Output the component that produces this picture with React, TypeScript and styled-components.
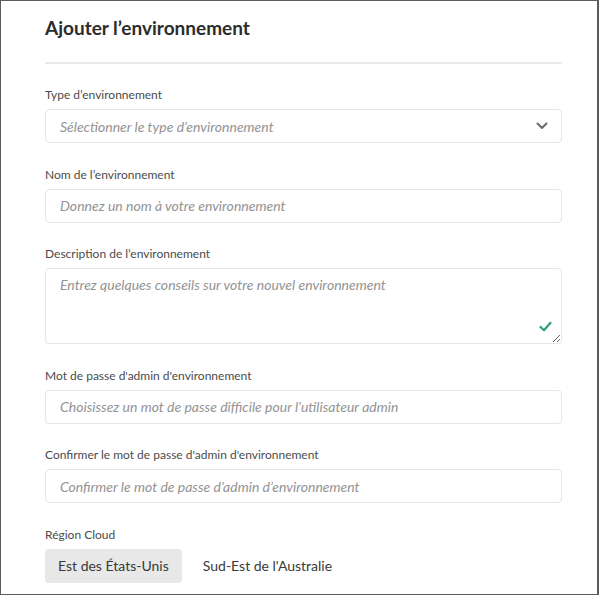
import React from "react";
import styled, { createGlobalStyle } from "styled-components";

const Global = createGlobalStyle`
  html, body { margin: 0; padding: 0; background: #fff; }
  body { font-family: Lato, "Open Sans", sans-serif; }
  * { box-sizing: border-box; }
`;

const Frame = styled.div`
  width: 599px;
  height: 595px;
  border: 1px solid #5c5c5c;
  border-right-width: 2px;
  background: #fff;
  padding: 15px 35px 0 44px;
  overflow: hidden;
`;

const Title = styled.h1`
  margin: 0;
  font-size: 19px;
  line-height: 24px;
  font-weight: 700;
  color: #2c2c2c;
`;

const Divider = styled.hr`
  margin: 22px 0 23px;
  border: none;
  height: 2px;
  background: #eaeaea;
`;

const Form = styled.div`
  display: flex;
  flex-direction: column;
  gap: 23.5px;
`;

const Field = styled.div`
  display: flex;
  flex-direction: column;
`;

const Label = styled.label`
  font-size: 12px;
  line-height: 16px;
  color: #4b4b4b;
  margin-bottom: 6px;
`;

const fieldBase = `
  width: 100%;
  border: 1px solid #e6e6e6;
  border-radius: 4px;
  background: #fff;
  font-family: Lato, "Open Sans", sans-serif;
  font-size: 14px;
  color: #2c2c2c;
  outline: none;
`;

const TextInput = styled.input`
  ${fieldBase}
  height: 34px;
  padding: 0 14px;
  &::placeholder { color: #939393; font-style: italic; }
`;

const SelectBox = styled.div`
  ${fieldBase}
  height: 34px;
  padding: 0 13px 0 14px;
  display: flex;
  align-items: center;
  justify-content: space-between;
  cursor: pointer;
`;

const Placeholder = styled.span`
  color: #939393;
  font-style: italic;
`;

const AreaWrap = styled.div`
  position: relative;
`;

const TextArea = styled.textarea`
  ${fieldBase}
  display: block;
  height: 76px;
  padding: 6px 14px;
  line-height: 20px;
  resize: both;
  &::placeholder { color: #939393; font-style: italic; }
`;

const Check = styled.svg`
  position: absolute;
  right: 10px;
  bottom: 12px;
`;

const Segments = styled.div`
  display: flex;
  gap: 8px;
`;

const Segment = styled.button<{ $selected?: boolean }>`
  height: 34px;
  padding: 0 13px;
  border: none;
  border-radius: 4px;
  background: ${(p) => (p.$selected ? "#e8e8e8" : "transparent")};
  color: #3a3a3a;
  font-family: Lato, "Open Sans", sans-serif;
  font-size: 14px;
  cursor: pointer;
`;

export default function App() {
  return (
    <>
      <Global />
      <Frame>
        <Title>Ajouter l’environnement</Title>
        <Divider />
        <Form>
          <Field>
            <Label>Type d’environnement</Label>
            <SelectBox>
              <Placeholder>Sélectionner le type d’environnement</Placeholder>
              <svg width="12" height="8" viewBox="0 0 12 8">
                <path d="M1.5 1.5 L6 6 L10.5 1.5" fill="none" stroke="#6b6b6b" strokeWidth="2" strokeLinecap="round" strokeLinejoin="round" />
              </svg>
            </SelectBox>
          </Field>
          <Field>
            <Label>Nom de l’environnement</Label>
            <TextInput placeholder="Donnez un nom à votre environnement" />
          </Field>
          <Field>
            <Label>Description de l’environnement</Label>
            <AreaWrap>
              <TextArea placeholder="Entrez quelques conseils sur votre nouvel environnement" />
              <Check width="13" height="11" viewBox="0 0 13 11">
                <path d="M1.5 6 L5 9.2 L11.5 1.8" fill="none" stroke="#2d9d78" strokeWidth="2.2" strokeLinecap="round" strokeLinejoin="round" />
              </Check>
            </AreaWrap>
          </Field>
          <Field>
            <Label>Mot de passe d'admin d'environnement</Label>
            <TextInput type="password" placeholder="Choisissez un mot de passe difficile pour l’utilisateur admin" />
          </Field>
          <Field>
            <Label>Confirmer le mot de passe d'admin d'environnement</Label>
            <TextInput type="password" placeholder="Confirmer le mot de passe d’admin d’environnement" />
          </Field>
          <Field>
            <Label>Région Cloud</Label>
            <Segments>
              <Segment $selected>Est des États-Unis</Segment>
              <Segment>Sud-Est de l'Australie</Segment>
            </Segments>
          </Field>
        </Form>
      </Frame>
    </>
  );
}
